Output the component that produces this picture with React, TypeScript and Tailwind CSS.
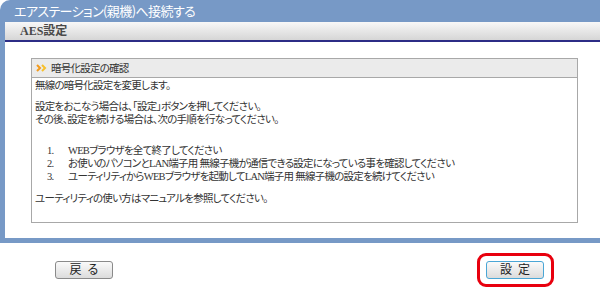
import React from 'react'

const jp = "[font-family:'Liberation_Serif','Noto_Sans_CJK_JP',serif]"

function Chevrons() {
  return (
    <svg width="11" height="8" viewBox="0 0 11 8" className="shrink-0">
      <path d="M1 1 L4 4 L1 7" fill="none" stroke="#f39a1c" strokeWidth="2" />
      <path d="M6 1 L9 4 L6 7" fill="none" stroke="#f7c02a" strokeWidth="2" />
    </svg>
  )
}

const steps = [
  'WEBブラウザを全て終了してください',
  'お使いのパソコンとLAN端子用 無線子機が通信できる設定になっている事を確認してください',
  'ユーティリティからWEBブラウザを起動してLAN端子用 無線子機の設定を続けてください',
]

export default function App() {
  return (
    <div className={`w-[600px] h-[288px] bg-white overflow-hidden ${jp} [font-feature-settings:'palt']`}>
      <div className="bg-[#7799c6] rounded-tl-[10px] pl-[5px] pb-[5px]">
        <div className="h-[22px] flex items-center pl-[9px] text-white text-[13px] tracking-[-0.6px] [font-family:'Noto_Sans_CJK_JP',sans-serif]">
          エアステーション(親機)へ接続する
        </div>
        <div className="h-[18px] bg-gradient-to-b from-[#f8f8f8] to-[#d6d6d6] flex items-center pl-[15px] text-[12px] font-bold text-[#4a4a4a]">
          AES設定
        </div>
        <div className="h-[2px] bg-[#2c2c86]" />
        <div className="bg-white h-[196px] pt-[16px] pl-[26px] pr-[22px]">
          <div className="border border-[#a8a8a8] h-[165px] text-[10.5px] tracking-[-0.75px] leading-[13px] text-[#333]">
            <div className="h-[19px] bg-[#ebebeb] border-b border-[#a8a8a8] flex items-center gap-[4px] pl-[4px]">
              <Chevrons />
              <span>暗号化設定の確認</span>
            </div>
            <div className="px-[3px] pt-[1px] flex flex-col gap-[8px]">
              <p>無線の暗号化設定を変更します。</p>
              <p>
                設定をおこなう場合は、「設定」ボタンを押してください。
                <br />
                その後、設定を続ける場合は、次の手順を行なってください。
              </p>
              <ol className="mt-[10px] mb-[1px] pl-[12px]">
                {steps.map((s, i) => (
                  <li key={i} className="flex">
                    <span className="w-[21px] shrink-0">{i + 1}.</span>
                    <span>{s}</span>
                  </li>
                ))}
              </ol>
              <p>ユーティリティの使い方はマニュアルを参照してください。</p>
            </div>
          </div>
        </div>
      </div>
      <div className="flex justify-between items-center pl-[55px] pr-[46px] pt-[10px]">
        <button className="w-[58px] h-[18px] rounded-[3px] border border-[#8a8a8a] bg-gradient-to-b from-[#fafafa] to-[#dcdcdc] text-[12px] text-[#222] tracking-[6px] pl-[6px] leading-none">
          戻る
        </button>
        <div className="rounded-[9px] border-[3px] border-[#e8000e] p-[5px] pl-[6px] pr-[7px]">
          <button className="block w-[58px] h-[18px] rounded-[3px] border border-[#4aa6d6] bg-gradient-to-b from-[#fafafa] to-[#dcdcdc] text-[12px] text-[#222] tracking-[6px] pl-[6px] leading-none">
            設定
          </button>
        </div>
      </div>
    </div>
  )
}
